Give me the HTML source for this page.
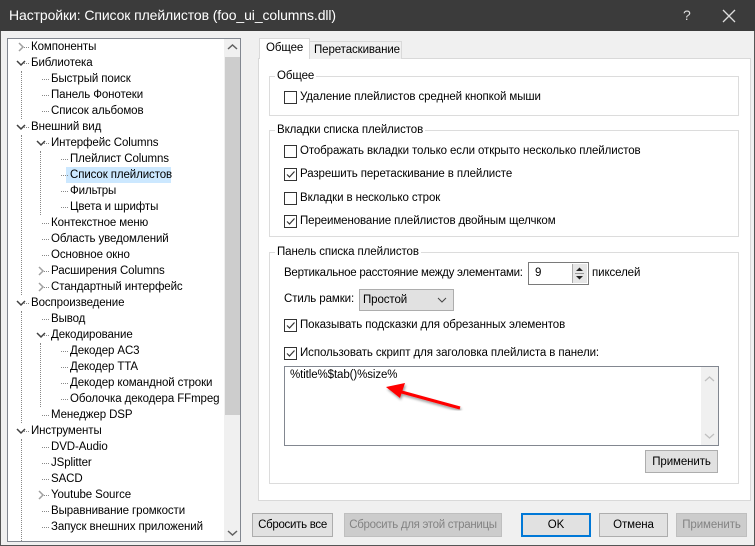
<!DOCTYPE html>
<html><head><meta charset="utf-8"><style>
*{box-sizing:border-box;margin:0;padding:0}
html,body{overflow:hidden}
body{width:755px;height:546px;overflow:hidden;background:#f0f0f0;font-family:"Liberation Sans","DejaVu Sans",sans-serif;font-size:11.5px;letter-spacing:-0.1px;color:#000;position:relative}
.a{position:absolute;white-space:nowrap}
.t{position:absolute;white-space:nowrap;line-height:16px}
.cb{position:absolute;width:13px;height:13px;border:1px solid #333;background:#fff}
.gb{position:absolute;border:1px solid #dcdcdc}
.gl{position:absolute;background:#fff;padding:0 2px;line-height:14px}
.btn{position:absolute;height:24px;border:1px solid #adadad;background:#e1e1e1;text-align:center;line-height:22px;white-space:nowrap;overflow:hidden}
.dis{color:#838383;border-color:#bfbfbf;background:#cccccc}
.vd{position:absolute;border-left:1px dotted #888;width:0}
.hd{position:absolute;border-top:1px dotted #888;height:0}
</style></head><body>
<div class="a" style="left:0;top:0;width:755px;height:31px;background:#3b3b3b;color:#fff;font-size:14px;line-height:31px;padding-left:9px">Настройки: Список плейлистов (foo_ui_columns.dll)</div>
<div class="a" style="left:683px;top:0;color:#ddd;font-size:14px;line-height:31px">?</div>
<svg class="a" style="left:722px;top:9px" width="14" height="14"><path d="M1 1L13 13M13 1L1 13" stroke="#ddd" stroke-width="1.3"/></svg>
<div class="a" style="left:0;top:31px;width:755px;height:515px;border:1px solid #555;border-top:none"></div>

<div class="a" style="left:7px;top:38px;width:234px;height:504px;background:#fff;border:1px solid #828790;overflow:hidden">
<div class="a" style="left:216px;top:0;width:17px;height:502px;background:#f0f0f0"></div>
<div class="a" style="left:217px;top:18px;width:15px;height:358px;background:#cdcdcd"></div>
<svg class="a" style="left:219px;top:4px" width="11" height="8"><path d="M1 6L5.5 2L10 6" stroke="#606060" stroke-width="1.5" fill="none"/></svg>
<svg class="a" style="left:219px;top:490px" width="11" height="8"><path d="M1 2L5.5 6L10 2" stroke="#606060" stroke-width="1.5" fill="none"/></svg>
<div class="a" style="left:58px;top:128px;width:105px;height:16px;background:#cce8ff"></div>
<div class="vd" style="left:13px;top:32px;height:48px"></div>
<div class="vd" style="left:13px;top:96px;height:160px"></div>
<div class="vd" style="left:32px;top:112px;height:64px"></div>
<div class="vd" style="left:13px;top:272px;height:112px"></div>
<div class="vd" style="left:32px;top:304px;height:64px"></div>
<div class="vd" style="left:13px;top:400px;height:110px"></div>
</div>
<script>
var items=[["Компоненты",0,">"],["Библиотека",0,"v"],["Быстрый поиск",1],["Панель Фонотеки",1],["Список альбомов",1],["Внешний вид",0,"v"],["Интерфейс Columns",1,"v"],["Плейлист Columns",2],["Список плейлистов",2],["Фильтры",2],["Цвета и шрифты",2],["Контекстное меню",1],["Область уведомлений",1],["Основное окно",1],["Расширения Columns",1,">"],["Стандартный интерфейс",1,">"],["Воспроизведение",0,"v"],["Вывод",1],["Декодирование",1,"v"],["Декодер AC3",2],["Декодер TTA",2],["Декодер командной строки",2],["Оболочка декодера FFmpeg",2],["Менеджер DSP",1],["Инструменты",0,"v"],["DVD-Audio",1],["JSplitter",1],["SACD",1],["Youtube Source",1,">"],["Выравнивание громкости",1],["Запуск внешних приложений",1]];
var h="";
items.forEach(function(it,i){var y=39+16*i;var x=[31,51,70][it[1]];
h+='<div class="t" style="left:'+x+'px;top:'+y+'px">'+it[0]+'</div>';
h+='<div class="hd" style="left:'+(x-9)+'px;top:'+(y+8)+'px;width:7px"></div>';
var ax=x-15;
if(it[2]=="v")h+='<svg class="a" style="left:'+ax+'px;top:'+(y+5)+'px" width="10" height="7"><path d="M1 1L5 5L9 1" stroke="#404040" stroke-width="1.5" fill="none"/></svg>';
if(it[2]==">")h+='<svg class="a" style="left:'+(ax+2)+'px;top:'+(y+3)+'px" width="7" height="10"><path d="M1 1L5 5L1 9" stroke="#a0a0a0" stroke-width="1.5" fill="none"/></svg>';
});
document.body.insertAdjacentHTML("beforeend",h);
</script>

<div class="a" style="left:258px;top:58px;width:493px;height:443px;background:#fff;border:1px solid #d9d9d9"></div>
<div class="a" style="left:309px;top:41px;width:93px;height:18px;background:#f0f0f0;border:1px solid #d9d9d9;border-bottom:none;padding-left:4px;line-height:17px">Перетаскивание</div>
<div class="a" style="left:259px;top:38px;width:51px;height:21px;background:#fff;border:1px solid #d9d9d9;border-bottom:none;padding-left:6px;line-height:18px">Общее</div>

<div class="gb" style="left:269px;top:76px;width:470px;height:40px"></div>
<div class="gl" style="left:275px;top:69px">Общее</div>
<div class="cb" style="left:284px;top:91px"></div><div class="t" style="left:300px;top:89px">Удаление плейлистов средней кнопкой мыши</div>

<div class="gb" style="left:269px;top:130px;width:470px;height:107px"></div>
<div class="gl" style="left:275px;top:123px">Вкладки списка плейлистов</div>
<div class="cb" style="left:284px;top:145px"></div><div class="t" style="left:300px;top:143px">Отображать вкладки только если открыто несколько плейлистов</div>
<div class="cb" style="left:284px;top:168px"></div><div class="t" style="left:300px;top:166px">Разрешить перетаскивание в плейлисте</div>
<div class="cb" style="left:284px;top:192px"></div><div class="t" style="left:300px;top:190px">Вкладки в несколько строк</div>
<div class="cb" style="left:284px;top:215px"></div><div class="t" style="left:300px;top:213px">Переименование плейлистов двойным щелчком</div>

<div class="gb" style="left:269px;top:252px;width:470px;height:232px"></div>
<div class="gl" style="left:275px;top:245px">Панель списка плейлистов</div>
<div class="t" style="left:284px;top:265px;letter-spacing:-0.25px">Вертикальное расстояние между элементами:</div>
<div class="a" style="left:528px;top:262px;width:61px;height:23px;border:1px solid #7a7a7a;background:#fff;padding-left:6px;line-height:21px">9</div>
<div class="a" style="left:572px;top:264px;width:15px;height:19px;background:#e6e6e6;border-left:1px solid #aaa"></div>
<svg class="a" style="left:575px;top:266px" width="9" height="16"><path d="M1 5L4.5 1.5L8 5Z M1 10L4.5 13.5L8 10Z" fill="#222"/><path d="M0 7.5H9" stroke="#999"/></svg>
<div class="t" style="left:592px;top:265px">пикселей</div>
<div class="t" style="left:284px;top:291px">Стиль рамки:</div>
<div class="a" style="left:359px;top:289px;width:95px;height:22px;border:1px solid #adadad;background:#e1e1e1;padding-left:3px;line-height:20px">Простой</div>
<svg class="a" style="left:437px;top:297px" width="10" height="6"><path d="M1 1L5 5L9 1" stroke="#444" fill="none"/></svg>
<div class="cb" style="left:284px;top:319px"></div><div class="t" style="left:300px;top:317px">Показывать подсказки для обрезанных элементов</div>
<div class="cb" style="left:284px;top:347px"></div><div class="t" style="left:300px;top:345px">Использовать скрипт для заголовка плейлиста в панели:</div>
<div class="a" style="left:284px;top:366px;width:435px;height:80px;border:1px solid #828790;background:#fff"></div>
<div class="a" style="left:701px;top:367px;width:17px;height:78px;background:#f0f0f0"></div>
<svg class="a" style="left:704px;top:375px" width="11" height="8"><path d="M1 6L5.5 2L10 6" stroke="#c0c0c0" stroke-width="1.3" fill="none"/></svg>
<svg class="a" style="left:704px;top:432px" width="11" height="8"><path d="M1 2L5.5 6L10 2" stroke="#c0c0c0" stroke-width="1.3" fill="none"/></svg>
<div class="t" style="left:290px;top:367px">%title%$tab()%size%</div>
<div class="btn" style="left:645px;top:450px;width:73px;height:23px">Применить</div>

<svg class="a" style="left:0;top:0" width="755" height="546">
<defs><filter id="s"><feDropShadow dx="1" dy="2" stdDeviation="1.2" flood-opacity="0.4"/></filter></defs>
<g filter="url(#s)"><path d="M460 408L398 391" stroke="#f00" stroke-width="3"/><path d="M386 387L405 383L400 398Z" fill="#f00"/></g>
</svg>
<script>
document.querySelectorAll('.cb').forEach(function(c,i){if([2,4,5,6].indexOf(i)>=0)c.innerHTML='<svg width="11" height="11" style="position:absolute;left:0;top:0"><path d="M2 5.5L4.5 8L9.5 2.5" stroke="#333" stroke-width="1.2" fill="none"/></svg>';});
</script>

<div class="btn" style="left:252px;top:513px;width:81px;letter-spacing:-0.3px">Сбросить все</div>
<div class="btn dis" style="left:344px;top:513px;width:158px;letter-spacing:-0.3px">Сбросить для этой страницы</div>
<div class="btn" style="left:521px;top:513px;width:70px;border:2px solid #0078d7;line-height:20px">OK</div>
<div class="btn" style="left:599px;top:513px;width:69px">Отмена</div>
<div class="btn dis" style="left:676px;top:513px;width:71px">Применить</div>
</body></html>
